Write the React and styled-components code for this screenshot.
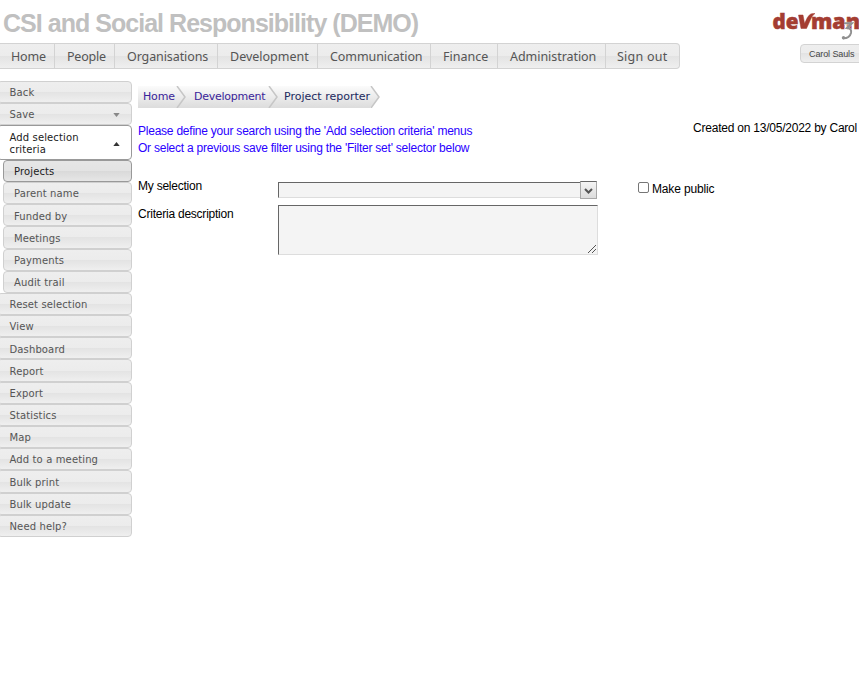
import React from "react";
import styled, { createGlobalStyle } from "styled-components";

const Global = createGlobalStyle`
  *{box-sizing:border-box}
  body{margin:0;background:#fff;overflow:hidden;font:12px "Liberation Sans",Arial,sans-serif;letter-spacing:-.23px;color:#000}
`;
const Page = styled.div`width:859px;height:675px;overflow:hidden;`;
const glass = "linear-gradient(#eeeeee 0%,#ececec 50%,#e3e3e3 50%,#efefef 100%)";

const Header = styled.header`height:43px;display:flex;justify-content:space-between;padding:8px 0 0 3px;`;
const Title = styled.h1`
  margin:0;font:bold 25px/30px "Liberation Sans",Arial,sans-serif;letter-spacing:-.97px;color:#c0c0c0;white-space:nowrap;
`;
const Logo = styled.svg`display:block;width:87px;height:34px;`;

const Bar = styled.div`display:flex;justify-content:space-between;height:38px;`;
const Nav = styled.nav`
  display:flex;width:680px;height:26px;border:1px solid #d3d3d3;border-left:0;border-radius:0 4px 4px 0;
  background:${glass};
`;
const NavItem = styled.a`
  width:${p => p.$w}px;padding-left:${p => p.$pad || 12}px;border-right:${p => (p.$last ? 0 : 1)}px solid #d3d3d3;
  font:12.5px/26px "Noto Sans",sans-serif;letter-spacing:${p => p.$ls || 0}px;color:#555;white-space:nowrap;
`;
const User = styled.button`
  width:64px;height:19px;margin:1px -5px 0 0;padding:0 0 0 8px;flex:none;text-align:left;border:1px solid #d3d3d3;border-radius:4px;
  background:${glass};font:9px/16px "Liberation Sans",Arial,sans-serif;color:#444;letter-spacing:-.1px;white-space:nowrap;
`;

const Body = styled.div`display:flex;`;
const Side = styled.aside`width:132px;flex:none;`;
const Item = styled.a`
  display:flex;align-items:center;justify-content:space-between;
  height:${p => (p.$open ? 34.6 : 22.18)}px;margin-left:${p => (p.$sub ? 3 : -3)}px;
  padding:${p => (p.$open ? 2 : 2.3)}px 11px 0 ${p => (p.$sub ? 10 : 11.5)}px;
  border:1px solid ${p => (p.$active || p.$open ? "#999" : "#d0d0d0")};border-radius:4px;
  background:${p => (p.$open ? "#fff" : p.$active ? "linear-gradient(#e6e6e6 0%,#e3e3e3 50%,#d9d9d9 50%,#e6e6e6 100%)" : glass)};
  font:10px/12px "DejaVu Sans",Verdana,sans-serif;letter-spacing:.13px;
  color:${p => (p.$active || p.$open ? "#212121" : "#555")};
`;
const Arrow = styled.svg`width:7px;height:4px;flex:none;fill:${p => (p.$dark ? "#333" : "#888")};`;

const Main = styled.main`width:727px;padding:5px 0 0 6px;`;
const Crumbs = styled.div`display:flex;height:22px;`;
const Crumb = styled.a`
  display:flex;width:${p => p.$w}px;padding-left:${p => p.$pad}px;justify-content:space-between;
  background:linear-gradient(#fbfbfb,#dcdcdc);font:11px/22px "DejaVu Sans",Verdana,sans-serif;
  letter-spacing:${p => p.$ls}px;color:${p => p.$color || "#3a2499"};white-space:nowrap;
`;
const Chevron = styled.svg`width:11px;height:22px;flex:none;`;
const Intro = styled.div`display:flex;justify-content:space-between;height:70px;padding-top:15px;`;
const Hint = styled.p`margin:0;line-height:17px;color:#2a00ff;white-space:nowrap;`;
const Created = styled.div`padding-right:2px;line-height:17px;margin-top:-3px;white-space:nowrap;`;
const FieldRow = styled.div`display:grid;grid-template-columns:140px 360px 1fr;height:${p => p.$h}px;`;
const Label = styled.label`line-height:16px;padding-top:${p => p.$drop || 0}px;`;
const Combo = styled.div`display:flex;width:319px;height:18px;margin-top:3px;`;
const ComboInput = styled.input`
  width:302px;height:16px;margin-top:1px;border:1px solid #ddd;border-top-color:#666;border-left-color:#666;border-right:0;background:#f4f4f4;padding:0;
`;
const ComboButton = styled.button`
  display:grid;place-items:center;width:17px;height:18px;padding:2px 0 0;border:1px solid #a8a8a8;border-top-color:#666;background:linear-gradient(#f4f4f4,#dcdcdc);
`;
const Check = styled.label`display:flex;align-items:flex-start;line-height:17px;padding-top:3px;letter-spacing:-.15px;`;
const Box = styled.input`width:11px;height:11px;margin:1px 3px 0 0;appearance:none;border:1px solid #767676;border-radius:2px;background:#fff;`;
const Area = styled.div`
  display:flex;align-items:flex-end;justify-content:flex-end;width:320px;height:50px;background:#f4f4f4;
  border:1px solid #ddd;border-top-color:#666;border-left-color:#666;padding:0 1px 1px 0;
`;

const nav = [
  ["Home", 55, 11, -0.2], ["People", 60, 12, -0.2], ["Organisations", 103, 12, -0.1], ["Development", 100, 12],
  ["Communication", 113, 12, -0.08], ["Finance", 67, 12], ["Administration", 108, 12, -0.05], ["Sign out", 73, 11, 0.25],
];
const subs = ["Projects", "Parent name", "Funded by", "Meetings", "Payments", "Audit trail"];
const rest = ["Reset selection", "View", "Dashboard", "Report", "Export", "Statistics", "Map", "Add to a meeting", "Bulk print", "Bulk update", "Need help?"];

const Sep = ({ end }) => (
  <Chevron viewBox="0 0 11 22">
    {end && <path d="M0 0 9.5 11 0 22H11V0Z" fill="#fff" stroke="none" />}
    <path d="M1 0 9 11 1 22" fill="none" stroke="#c6c6c6" strokeWidth="1.5" />
  </Chevron>
);

export default function App() {
  return (
    <Page>
      <Global />
      <Header>
        <Title>CSI and Social Responsibility (DEMO)</Title>
        <Logo viewBox="0 0 87 34">
          <g fontFamily="Open Sans" fontWeight="800" fontSize="20.5" letterSpacing="0" fill="#a43d32" stroke="#a43d32" strokeWidth=".5">
            <text x="0.5" y="20.5" textLength="26" lengthAdjust="spacingAndGlyphs">de</text>
            <path d="M26.5 7H31L32.6 15.5Q35.5 8 38 6.4Q39.5 5.3 43 5.5Q40.7 7 39.5 9.5L34.5 20.5H29Z" />
            <text x="39" y="20.5" textLength="49" lengthAdjust="spacingAndGlyphs">man</text>
          </g>
          <path d="M72 15.3H79.5L75 20Q79.5 20.5 78.5 25Q77 30.5 70.5 30.3" fill="none" stroke="#fff" strokeOpacity=".5" strokeWidth="3.2" />
          <path d="M72 15.3H80L75 20Q80 20.4 79 25Q77.5 30.5 71 30.3" fill="none" stroke="#909090" strokeWidth="2" />
          <circle cx="71.5" cy="29.8" r="1.7" fill="#909090" />
        </Logo>
      </Header>
      <Bar>
        <Nav>{nav.map(([t, w, pad, ls], i) => <NavItem key={t} $w={w} $pad={pad} $ls={ls} $last={i === 7}>{t}</NavItem>)}</Nav>
        <User>Carol Sauls</User>
      </Bar>
      <Body>
        <Side>
          <Item>Back</Item>
          <Item>Save<Arrow viewBox="0 0 8 5"><path d="M0 0H8L4 5Z" /></Arrow></Item>
          <Item $open>Add selection<br />criteria<Arrow $dark viewBox="0 0 8 5"><path d="M0 5H8L4 0Z" /></Arrow></Item>
          {subs.map((t, i) => <Item key={t} $sub $active={i === 0}>{t}</Item>)}
          {rest.map(t => <Item key={t}>{t}</Item>)}
        </Side>
        <Main>
          <Crumbs>
            <Crumb $w={49} $pad={5} $ls={-0.15}>Home<Sep /></Crumb>
            <Crumb $w={92} $pad={7} $ls={-0.25}>Development<Sep /></Crumb>
            <Crumb $w={102} $pad={5} $ls={0} $color="#1c2a5e">Project reporter<Sep end /></Crumb>
          </Crumbs>
          <Intro>
            <Hint>Please define your search using the 'Add selection criteria' menus<br />Or select a previous save filter using the 'Filter set' selector below</Hint>
            <Created>Created on 13/05/2022 by Carol</Created>
          </Intro>
          <FieldRow $h={27}>
            <Label>My selection</Label>
            <Combo>
              <ComboInput />
              <ComboButton><svg width="9" height="8" viewBox="0 0 9 8"><path d="M1 2 4.5 5.5 8 2" fill="none" stroke="#555" strokeWidth="2" /></svg></ComboButton>
            </Combo>
            <Check><Box type="checkbox" />Make public</Check>
          </FieldRow>
          <FieldRow $h={50}>
            <Label $drop={1}>Criteria description</Label>
            <Area><svg width="8" height="8" viewBox="0 0 8 8"><path d="M0 8 8 0M4 8 8 4" stroke="#555" /></svg></Area>
          </FieldRow>
        </Main>
      </Body>
    </Page>
  );
}
